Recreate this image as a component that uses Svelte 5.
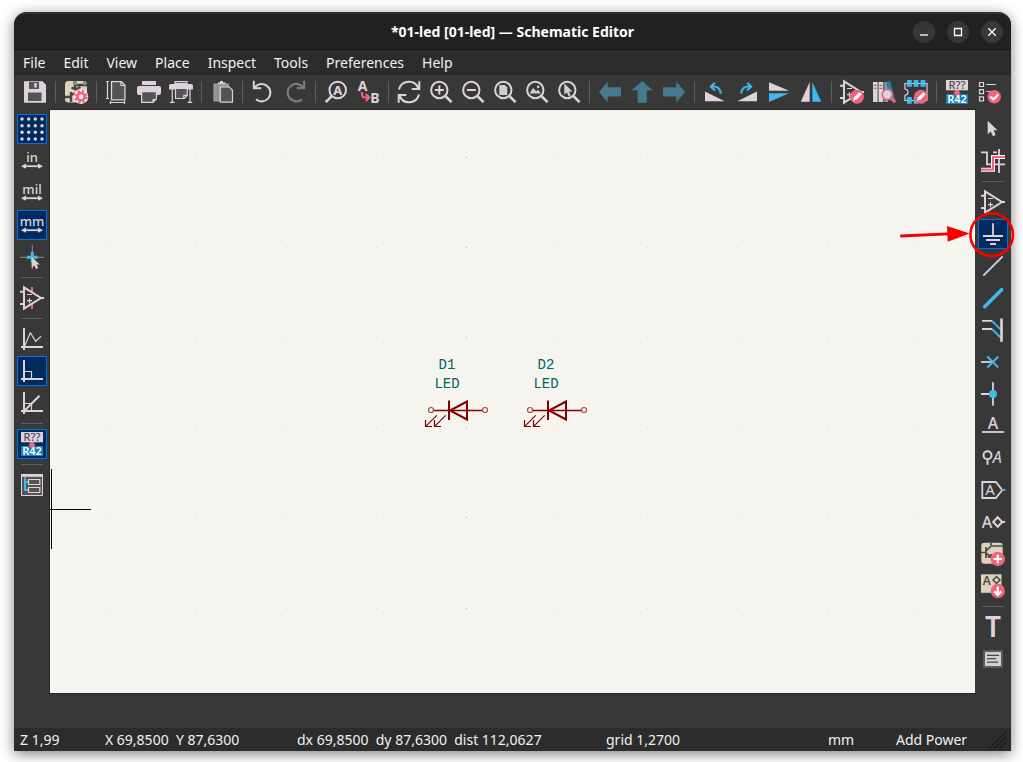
<script>
  const menus = ['File', 'Edit', 'View', 'Place', 'Inspect', 'Tools', 'Preferences', 'Help'];

  const topTools = [
    ['save'],
    ['setup'],
    ['page', 'print', 'plot'],
    ['paste'],
    ['undo', 'redo'],
    ['find', 'replace'],
    ['refresh', 'zoomin', 'zoomout', 'zoompage', 'zoomobjects', 'zoomselection'],
    ['back', 'up', 'forward'],
    ['rotateccw', 'rotatecw', 'mirrorv', 'mirrorh'],
    ['symboledit', 'library', 'footprint'],
    ['annotate', 'checklist']
  ];

  const leftTools = [
    ['grid', 'inch', 'mil', 'mm', 'cursor'],
    ['hiddenpins'],
    ['freeangle', 'rightangle', 'halfangle'],
    ['annotate'],
    ['hierarchy']
  ];
  const leftActive = ['grid', 'mm', 'rightangle', 'annotate'];

  const rightTools = [
    ['select', 'highlight'],
    ['symbol', 'power', 'wire', 'bus', 'busentry', 'noconnect', 'junction', 'label', 'netclass', 'globallabel', 'hierlabel', 'sheet', 'sheetpin'],
    ['text', 'textbox']
  ];

  const columns = [0, 1, 2, 3, 4, 5, 6, 7, 8, 9];
  const rows = [0, 1, 2, 3, 4, 5];
  const parts = [
    { ref: 'D1', value: 'LED', x: 0 },
    { ref: 'D2', value: 'LED', x: 99 }
  ];
  const status = ['Z 1,99', 'X 69,8500  Y 87,6300', 'dx 69,8500  dy 87,6300  dist 112,0627', 'grid 1,2700', 'mm', 'Add Power'];
  const units = { inch: 'in', mil: 'mil', mm: 'mm' };
</script>

{#snippet pencilBadge()}
  <circle cx="17" cy="16.7" r="7" class="red" />
  <path d="M13 20.7l.9-3.3 5.3-5.2 2.4 2.4-5.3 5.2z" fill="#fff" />
{/snippet}

{#snippet lens()}
  <circle cx="10.3" cy="10" r="8.2" class="line" />
  <path d="M16.3 16l6.2 6.2" class="line w3" />
{/snippet}

{#snippet opamp()}
  <path d="M4 1.4v21.2L21 12zM0 5.8h4M0 18h4M21 12h3" class="line" />
  <path d="M7 8.5h5M7 14.7h5M9.5 12.2v5" class="line thin" />
{/snippet}

{#snippet icon(name)}
  <svg class="icon" viewBox="0 0 24 24" aria-hidden="true">
    {#if name === 'save'}
      <path d="M1 1.3h18.5L23 4.8v17.9H1z" class="light" />
      <path d="M6 2h10v7H6zM5 12.5h13.5V21H5z" class="dark" />
      <path d="M11.3 3h2.4v4.5h-2.4z" class="light" />
    {:else if name === 'setup'}
      <rect x="1" y="1" width="22" height="21.5" rx="3.5" class="beige" />
      <path d="M11 1v8M7.5 7.5l4 2 5-2.5M11 5h12M1 17h6M7 12v10M7 15l5-2" fill="none" stroke="#454545" stroke-width="2.4" />
      <path d="M9 1h4v4H9zM19 1h3v4h-3z" fill="#8a8a86" />
      <circle cx="17" cy="16.7" r="7.3" fill="#fff" />
      <circle cx="17" cy="16.7" r="5.3" fill="none" stroke="#f2647e" stroke-width="3" stroke-dasharray="2.5 1.66" />
      <circle cx="17" cy="16.7" r="3.6" fill="#fff" stroke="#f2647e" stroke-width="2.6" />
    {:else if name === 'page'}
      <path d="M6.5 1.6h10l3.4 3.6v14.6H6.5z" class="dark" stroke="#ded3dd" stroke-width="1.3" />
      <path d="M16 1.5v4h4" class="line thin" />
      <path d="M1 1.5h3M2.5 1.5v17M1 18.5h3M5.5 21v3M5.5 22.5h14M19.5 21v3" class="line thin" />
    {:else if name === 'print'}
      <path d="M5 1h14v4H5zM2 6h20q2 0 2 2v5q0 2-2 2H2q-2 0-2-2V8q0-2 2-2z" class="light" />
      <path d="M4.6 11.6h14.8V19l-3.4 3.4H4.6z" class="dark" stroke="#ded3dd" stroke-width="1.2" />
      <path d="M15.5 22.5V19h4z" class="light" />
    {:else if name === 'plot'}
      <path d="M6 1.6h12v2H6z" fill="none" stroke="#ded3dd" stroke-width="1.2" />
      <path d="M2 4h20q2 0 2 2v3.5H0V6q0-2 2-2z" class="light" />
      <path d="M6.5 8.5h11.7v7l-3 3H6.5z" class="dark" stroke="#ded3dd" stroke-width="1.2" />
      <path d="M14.7 18.5v-3.2h3.5M3.3 9v13M1 22.3h4.6M21 9v13M18.6 22.3h4.6" class="line thin" />
    {:else if name === 'paste'}
      <path d="M4 4h14.5v17H4z" fill="#929292" stroke="#aaa5aa" />
      <path d="M8 4V2.6h2V1h3v1.6h2.5V4z" class="light" />
      <path d="M10.3 7h9l3.2 3.2v12H10.3z" class="dark" stroke="#ded3dd" stroke-width="1.2" />
    {:else if name === 'undo'}
      <path d="M2.8.8v7.4h7.4M3.3 8A8.7 8.7 0 1 1 5 19.3" class="line" />
    {:else if name === 'redo'}
      <path d="M21.2.8v7.4h-7.4M20.7 8A8.7 8.7 0 1 0 19 19.3" fill="none" stroke="#7c7a7c" stroke-width="2.2" />
    {:else if name === 'find'}
      <circle cx="13.7" cy="10" r="8.3" class="line" />
      <path d="M8 15.8l-6.3 6.4" class="line w3" />
      <text x="13.7" y="14.6" font-size="13" font-weight="700">A</text>
    {:else if name === 'replace'}
      <text x="6.5" y="10.5" font-size="14" font-weight="700">A</text>
      <text x="19" y="22.7" font-size="14" font-weight="700">B</text>
      <path d="M6 12v2.5q0 3 3 3h3M9.7 14l3.5 3.5-3.5 3.5" fill="none" stroke="#f2647e" stroke-width="2.2" />
    {:else if name === 'refresh'}
      <path d="M2 9.5A10.2 10.2 0 0 1 21.3 8M22.3 1.3V9h-7.6M22 14.5A10.2 10.2 0 0 1 2.7 16M1.7 22.7V15h7.6" class="line" />
    {:else if name === 'zoomin'}
      {@render lens()}
      <path d="M5.8 10h9M10.3 5.5v9" class="line" />
    {:else if name === 'zoomout'}
      {@render lens()}
      <path d="M5.8 10h9" class="line" />
    {:else if name === 'zoompage'}
      {@render lens()}
      <path d="M6.3 5h5.5l2.5 2.5V15h-8z" fill="#cfcfcf" />
    {:else if name === 'zoomobjects'}
      {@render lens()}
      <path d="M4.5 13.5L8 8l3.3 3.3 1.7-1.5 3 3.7z" fill="#cfcfcf" />
      <circle cx="13.2" cy="6.8" r="1.4" fill="#cfcfcf" />
    {:else if name === 'zoomselection'}
      {@render lens()}
      <path d="M7.3 3.5v11.3l2.5-2.4 1.9 4 2-1-1.8-3.8h3.6z" fill="#cfcfcf" />
    {:else if name === 'back'}
      <path d="M1 12L9.7 1.5V7.3H23v9.2H9.7v6z" class="steel" />
    {:else if name === 'up'}
      <path d="M12.2 1L22.7 10.3h-5.9v12.4H7.6V10.3H1.5z" class="steel" />
    {:else if name === 'forward'}
      <path d="M23 12L14.3 1.5V7.3H1v9.2h13.3v6z" class="steel" />
    {:else if name === 'rotateccw'}
      <path d="M2 11.5L21.7 21.3H2z" class="light" />
      <path d="M9 6.7Q17 5.5 17.8 13.7M11.7 2.7L7.8 6.8l4.3 3.8" class="blueline" />
    {:else if name === 'rotatecw'}
      <path d="M22 11.5L2.3 21.3H22z" class="light" />
      <path d="M15 6.7Q7 5.5 6.2 13.7M12.3 2.7l3.9 4.1-4.3 3.8" class="blueline" />
    {:else if name === 'mirrorv'}
      <path d="M2 2.2l20 8.5H2z" class="light" />
      <path d="M2 13.3h20L2 22z" class="blue" />
    {:else if name === 'mirrorh'}
      <path d="M10.7 2v19.8H1.8z" class="light" />
      <path d="M13.3 2v19.8h8.9z" class="blue" />
    {:else if name === 'symboledit'}
      {@render opamp()}
      {@render pencilBadge()}
    {:else if name === 'library'}
      <path d="M1 2h4.6v20H1zM6.5 2h4.8v20H6.5z" class="light" />
      <path d="M12.3 2h3.8v20h-3.8z" fill="#9a949a" />
      <path d="M13.8 2l4.4-1L23 20l-4.4 1z" fill="#2383ae" />
      <path d="M1.7 5.3h3M1.7 8.3h3M7.4 5.3h3M7.4 8.3h3" stroke="#666" />
      <path d="M19 17.8l4.2 4.4" stroke="#f2647e" stroke-width="3" />
      <circle cx="15.3" cy="14.5" r="5" fill="#d9d5da" stroke="#f2647e" stroke-width="1.7" />
    {:else if name === 'footprint'}
      <path d="M1 3.5h22v17H1v-5.2q3-.6 3-3.1T1 9z" class="line thin" />
      <path d="M3 0h4.8v6.7H3zM9.7 0h4.8v6.7H9.7zM16.6 0h4.8v6.7h-4.8zM3 17h4.8v6.7H3zM9.7 17h4.8v6.7H9.7z" class="blue" />
      {@render pencilBadge()}
    {:else if name === 'annotate'}
      <rect x="1" width="22" height="10.3" class="light" />
      <rect x="1" y="14" width="22" height="10" fill="#1a81b4" />
      <text x="12" y="9.2" font-size="11" font-weight="500" class="darktext">R??</text>
      <path d="M9.7 10h4.6v2.3h1.5L12 17l-3.8-4.7h1.5z" class="red" />
      <text x="12" y="23" font-size="11" font-weight="600" class="whitetext">R42</text>
    {:else if name === 'checklist'}
      <path d="M2.5 2.5h4v4h-4zM2.5 9.7h4v4h-4zM2.5 16.9h4v4h-4zM9.3 4.5H19M9.3 11.5h6" class="line thin" />
      <circle cx="17.2" cy="16.7" r="6.8" class="red" />
      <path d="M13.4 16.5l3 3 4.8-5" fill="none" stroke="#fff" stroke-width="2.2" />
    {:else if name === 'grid'}
      {#each [2, 8.7, 15.3, 22] as cy}
        {#each [2, 8.7, 15.3, 22] as cx}
          <circle {cx} {cy} r="1.7" class="light" />
        {/each}
      {/each}
    {:else if units[name]}
      <text x="12" y="13" font-size="13" font-weight="500">{units[name]}</text>
      <path d="M4 17.2h16" class="line w15" />
      <path d="M1 17.2l5-2.6v5.2zM23 17.2l-5-2.6v5.2z" class="light" />
    {:else if name === 'cursor'}
      <path d="M12.3 0v24M0 12.3h24" stroke="#8f8d8f" />
      <path d="M12.3 7v10.6M7 12.3h10.6" stroke="#42b8eb" stroke-width="3" />
      <path d="M11.7 12v11l2.6-2.4 1.7 3.4 2.3-1.1-1.7-3.3h3.2z" class="light" />
    {:else if name === 'hiddenpins'}
      <path d="M12 1v5M12 18v5" stroke="#f2647e" stroke-width="2" />
      {@render opamp()}
    {:else if name === 'freeangle'}
      <path d="M4 1v22M1 20h22" class="line" />
      <path d="M4.7 19l5.6-13.3 5.4 8.6L21 9.3" class="line thin" />
    {:else if name === 'rightangle'}
      <path d="M4 1v22M1 20h22" class="line" />
      <path d="M5 12.5h6.5V19" class="line thin" />
    {:else if name === 'halfangle'}
      <path d="M4 1v22M1 20h22M4.7 19.5L19.5 4.7" class="line" />
      <path d="M5 12.5h6.5V19" class="line thin" />
    {:else if name === 'hierarchy'}
      <path d="M1.5 1.5h21v21h-21z" class="dark" stroke="#ded3dd" />
      <path d="M1 1h22v2.8H1z" class="light" />
      <path d="M5 4.5V17h3.5M5 9h3.5" class="blueline" />
      <path d="M8.5 6.5h11.3v5H8.5zM8.5 14.5h11.3v5H8.5z" class="line thin" />
    {:else if name === 'select'}
      <path d="M6.7 3.7v13.6l3.1-2.8 2.2 4.7 2.7-1.3-2.2-4.6h4z" class="light" />
    {:else if name === 'highlight'}
      <path d="M0 3.3h6v12h5M13 15.3h11M18 0v24M12 3.3h4" class="line w15" />
      <path d="M0 20.7h12V8h12" fill="none" stroke="#fff" stroke-width="4" />
      <path d="M0 20.7h12V8h12" fill="none" stroke="#f2647e" stroke-width="2.2" />
    {:else if name === 'symbol'}
      {@render opamp()}
    {:else if name === 'power'}
      <path d="M12 1.3V14M2 14h20M5 18h14M9 22h6" class="line w15" />
    {:else if name === 'wire'}
      <path d="M2.3 21.7L21.7 2.3" class="line w15" />
    {:else if name === 'bus'}
      <path d="M3.6 20.7L20.6 3.7" stroke="#42b8eb" stroke-width="3.6" stroke-linecap="round" />
    {:else if name === 'busentry'}
      <path d="M1 2.8h10M1 11h10" class="line w15" />
      <path d="M11 2.8l9.5 9.5M11 11l9.5 9.5" stroke="#42b8eb" stroke-width="1.8" />
      <path d="M20.5.5v23.3" class="line w3" />
    {:else if name === 'noconnect'}
      <path d="M0 12h11" class="line w15" />
      <path d="M6.3 6.5l11 11M17.3 6.5l-11 11" class="blueline" />
    {:else if name === 'junction'}
      <path d="M0 12h12M12 .3v23.4" class="line w15" />
      <circle cx="12" cy="12" r="4" class="blue" />
    {:else if name === 'label'}
      <text x="12" y="15" font-size="16" font-weight="500">A</text>
      <path d="M1 18h22" class="line w15" />
    {:else if name === 'netclass'}
      <circle cx="6.5" cy="9.3" r="4" class="line" />
      <path d="M6.5 13.3v5.5" class="line" />
      <text x="16.2" y="16.7" font-size="16" font-style="italic">A</text>
    {:else if name === 'globallabel'}
      <path d="M1.3 4h13.5l6.5 8-6.5 8H1.3z" class="line w15" />
      <path d="M21 12h3.5" stroke="#42b8eb" stroke-width="2" />
      <text x="9" y="17.2" font-size="15">A</text>
    {:else if name === 'hierlabel'}
      <text x="6" y="17.5" font-size="16" font-weight="500">A</text>
      <path d="M12.2 12l4.5-4.7 4.5 4.7-4.5 4.7zM21 12h3" class="line" />
    {:else if name === 'sheet'}
      <rect x=".3" y=".7" width="21.4" height="21" rx="3" class="beige" />
      <path d="M5 5v11M5 9l5-5h12M0 10.5h5M5 11l5 4M10 3V1M10 12v3H6.5" fill="none" stroke="#484848" stroke-width="1.7" />
      <circle cx="16.8" cy="17" r="7.2" class="red" />
      <path d="M16.8 12.8v8.4M12.6 17H21" stroke="#fff" stroke-width="2.2" />
    {:else if name === 'sheetpin'}
      <path d="M0 .3h20.5v18.5H0z" class="beige" />
      <text x="5.7" y="10.7" font-size="12" font-weight="600" class="darktext">A</text>
      <path d="M12 6l3.5-3.5L19 6l-3.5 3.5z" fill="none" stroke="#484848" stroke-width="1.5" />
      <circle cx="16.8" cy="17" r="7.2" class="red" />
      <path d="M16.8 12.5v8M13.3 17.4l3.5 3.5 3.5-3.5" fill="none" stroke="#fff" stroke-width="2.2" />
    {:else if name === 'text'}
      <text x="12" y="22" font-size="28" font-weight="600">T</text>
    {:else if name === 'textbox'}
      <path d="M2 3h20v18H2z" fill="#5a5a5a" />
      <path d="M4 5h16v14H4z" fill="#cfcfcf" />
      <path d="M6 8.3h12M6 11.7h9M6 15.2h11" stroke="#484848" stroke-width="1.3" />
    {/if}
  </svg>
{/snippet}

{#snippet toolbar(groups, kind, active)}
  <div class="tools {kind}" role="toolbar" aria-label={kind}>
    {#each groups as group, i}
      {#if i > 0}<span class="sep"></span>{/if}
      {#each group as name}
        <button class="tool" class:active={active.includes(name)} aria-label={name}>
          {@render icon(name)}
          {#if kind === 'right' && name === 'power'}
            <svg class="callout" width="116" height="46" viewBox="0 0 116 46" aria-hidden="true">
              <circle cx="92.7" cy="22.7" r="21.3" fill="none" stroke="#f60000" stroke-width="2.6" />
              <path d="M1.3 24L50 21.8" stroke="#f60000" stroke-width="2.8" />
              <path d="M48 14l22.7 7.4L48.7 29.7z" fill="#f60000" />
            </svg>
          {/if}
        </button>
      {/each}
    {/each}
  </div>
{/snippet}

<div class="desktop">
  <main class="window">
    <header class="titlebar">
      <h1>*01-led [01-led] — Schematic Editor</h1>
      <div class="controls">
        <button aria-label="Minimize"><svg viewBox="0 0 22 22"><path d="M7 14h8" /></svg></button>
        <button aria-label="Maximize"><svg viewBox="0 0 22 22"><path d="M7.5 7.5h7v7h-7z" /></svg></button>
        <button aria-label="Close"><svg viewBox="0 0 22 22"><path d="M7.3 7.3l7.4 7.4M14.7 7.3l-7.4 7.4" /></svg></button>
      </div>
    </header>

    <nav class="menubar">
      {#each menus as menu}<button>{menu}</button>{/each}
    </nav>

    {@render toolbar(topTools, 'top', [])}

    <div class="workspace">
      {@render toolbar(leftTools, 'left', leftActive)}
      <section class="sheet" aria-label="Schematic">
        <svg width="100%" height="100%">
          {#each rows as r}
            {#each columns as c}
              <rect x={Math.round(55.6 + c * 90.2)} y={Math.round(46.5 + r * 90.2)} width="1" height="1" fill={c === 4 ? '#aaaaa8' : '#d3d2ce'} />
            {/each}
          {/each}
          <path d="M1.5 359v80M0 399.5h41" stroke="#000" />
          {#each parts as part}
            <g transform="translate({part.x} 0)">
              <text class="field" x="397" y="259">{part.ref}</text>
              <text class="field" x="397" y="278">{part.value}</text>
              <g class="led">
                <path d="M383 300.5h50" stroke-width="1.3" />
                <path d="M399 290.5v19.5M417 291.5v18l-17-9z" stroke-width="2" />
                <path d="M386.7 305.3l-11 11M375.5 310v6.5h6.5M395.7 305.3l-11 11M384.5 310v6.5h6.5" stroke-width="1.2" />
                <circle cx="381" cy="300" r="2.5" />
                <circle cx="435" cy="300" r="2.5" />
              </g>
            </g>
          {/each}
        </svg>
      </section>
      {@render toolbar(rightTools, 'right', ['power'])}
    </div>

    <div class="message"></div>

    <footer class="status">
      {#each status as item}<span>{item}</span>{/each}
      <svg class="grip" width="18" height="18" viewBox="0 0 18 18" aria-hidden="true">
        <path d="M0 18L17 1M5 18L17 6M10 18l7-7" />
      </svg>
    </footer>
  </main>
</div>

<style>
  :global(body) {
    margin: 0;
    background: #fff;
  }
  .desktop {
    box-sizing: border-box;
    min-height: 100vh;
    padding: 12px 12px 11px 14px;
    display: flex;
    overflow: hidden;
    font-family: 'Noto Sans', 'Open Sans', sans-serif;
    font-size: 14px;
    color: #f2f2f2;
  }
  .window {
    flex: 1;
    min-width: 0;
    display: flex;
    flex-direction: column;
    background: #383838;
    border-radius: 13px 13px 0 0;
    box-shadow: 0 3px 14px rgba(0, 0, 0, 0.5);
  }
  button {
    border: 0;
    padding: 0;
    background: none;
    color: inherit;
    font: inherit;
  }
  .titlebar {
    box-sizing: border-box;
    height: 38px;
    display: grid;
    grid-template-columns: 1fr auto 1fr;
    align-items: center;
    padding: 0 8px;
    background: #212121;
    border-top: 2px solid #333;
    border-bottom: 1px solid #131313;
    border-radius: 13px 13px 0 0;
  }
  h1 {
    grid-column: 2;
    margin: 0;
    font-size: 14px;
    line-height: 20px;
    font-weight: 700;
    color: #fff;
  }
  .controls {
    display: flex;
    justify-content: flex-end;
    gap: 12px;
  }
  .controls button {
    width: 22px;
    height: 22px;
    border-radius: 50%;
    background: #373737;
  }
  .controls svg {
    display: block;
    fill: none;
    stroke: #fff;
    stroke-width: 1.3;
  }
  .menubar {
    box-sizing: border-box;
    height: 25px;
    display: flex;
    gap: 2px;
    padding-left: 1px;
    background: #2c2c2c;
    border-bottom: 1px solid #242424;
  }
  .menubar button {
    padding: 2px 8px 0;
    line-height: 22px;
  }
  .tools {
    display: flex;
    align-items: center;
    background: #383838;
  }
  .top {
    padding: 1px 5px 2px;
  }
  .left,
  .right {
    flex-direction: column;
    width: 36px;
    padding-top: 3px;
  }
  .tool {
    position: relative;
    box-sizing: border-box;
    flex: none;
    width: 30px;
    height: 30px;
    margin: 1px;
    border: 1px solid transparent;
    display: grid;
    place-items: center;
  }
  .active {
    background: #002b5c;
    border-color: #0073e5;
  }
  .sep {
    flex: none;
    background: #5f5f5f;
  }
  .top .sep {
    width: 1px;
    height: 22px;
    margin: 0 4px;
  }
  .left .sep,
  .right .sep {
    width: 22px;
    height: 1px;
    margin: 4px 0;
  }
  .icon {
    display: block;
    width: 24px;
    height: 24px;
    overflow: visible;
  }
  .icon text {
    fill: #ded3dd;
    text-anchor: middle;
  }
  .icon .darktext {
    fill: #484848;
  }
  .icon .whitetext {
    fill: #fff;
  }
  .light {
    fill: #ded3dd;
  }
  .dark {
    fill: #545454;
  }
  .beige {
    fill: #ded2bb;
  }
  .red {
    fill: #f2647e;
  }
  .blue {
    fill: #42b8eb;
  }
  .steel {
    fill: #46788e;
  }
  .line {
    fill: none;
    stroke: #ded3dd;
    stroke-width: 2;
  }
  .thin {
    stroke-width: 1.2;
  }
  .w15 {
    stroke-width: 1.8;
  }
  .w3 {
    stroke-width: 2.6;
  }
  .blueline {
    fill: none;
    stroke: #42b8eb;
    stroke-width: 2;
  }
  .callout {
    position: absolute;
    top: -8px;
    right: -8px;
    pointer-events: none;
    z-index: 1;
  }
  .workspace {
    flex: 1;
    min-height: 583px;
    display: flex;
  }
  .sheet {
    flex: 1;
    min-width: 0;
    display: flex;
    background: #f5f4ef;
    box-shadow: 0 0 0 1px #242424;
  }
  .sheet > svg {
    display: block;
  }
  .field {
    font-family: 'Liberation Mono', monospace;
    font-size: 14px;
    fill: #006464;
    text-anchor: middle;
  }
  .led {
    fill: none;
    stroke: #840000;
  }
  .led circle {
    stroke: #a94848;
    stroke-width: 1.2;
  }
  .message {
    height: 35px;
  }
  .status {
    position: relative;
    display: grid;
    grid-template-columns: 85fr 192fr 309fr 222fr 68fr 115fr;
    padding-left: 6px;
    background: #2c2c2c;
    line-height: 23px;
    white-space: pre;
  }
  .grip {
    position: absolute;
    right: 4px;
    bottom: 2px;
    stroke: #1b1b1b;
    stroke-width: 1.2;
  }
</style>
